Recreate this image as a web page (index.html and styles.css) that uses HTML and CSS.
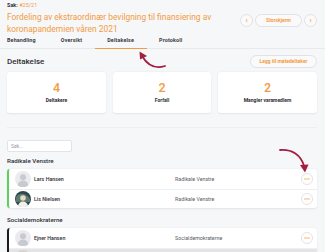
FILE: index.html
```html
<!DOCTYPE html>
<html lang="no">
  <head>
    <meta charset="UTF-8" />
    <title>Deltakelse</title>
    <link rel="stylesheet" href="styles.css">
  </head>
  <body>
    <div class="top">
      <div class="top-main">
        <div class="sak"><b>Sak:</b> <span class="sak-nr">#25/21</span></div>
        <h1>Fordeling av ekstraordinær bevilgning til finansiering av koronapandemien våren 2021</h1>
      </div>
      <div class="nav-buttons">
        <button class="round-btn">&#8249;</button>
        <button class="pill-btn">Storskjerm</button>
        <button class="round-btn">&#8250;</button>
      </div>
    </div>

    <nav class="tabs">
      <a class="tab">Behandling</a>
      <a class="tab">Oversikt</a>
      <a class="tab active">Deltakelse</a>
      <a class="tab">Protokoll</a>
    </nav>

    <main class="content">
      <div class="section-head">
        <h2>Deltakelse</h2>
        <button class="pill-btn">Legg til møtedeltaker</button>
      </div>

      <div class="stats">
        <div class="stat"><div class="stat-num">4</div><div class="stat-label">Deltakere</div></div>
        <div class="stat"><div class="stat-num">2</div><div class="stat-label">Forfall</div></div>
        <div class="stat"><div class="stat-num">2</div><div class="stat-label">Mangler varamedlem</div></div>
      </div>

      <hr class="divider" />

      <input class="search" type="text" placeholder="Søk..." />

      <h3 class="group-title">Radikale Venstre</h3>
      <div class="group green">
        <div class="row">
          <div class="person">
            <svg class="avatar" viewBox="0 0 16 16"><circle cx="8" cy="8" r="8" fill="#ebebef"/><circle cx="8" cy="6.2" r="3" fill="#c9c9d0"/><path d="M2.6 14.2c0.6-3 2.8-4.6 5.4-4.6s4.8 1.6 5.4 4.6a8 8 0 0 1-10.8 0z" fill="#c9c9d0"/></svg>
            <span class="name">Lars Hansen</span>
          </div>
          <span class="party">Radikale Venstre</span>
          <button class="more"><svg viewBox="0 0 10 10"><circle cx="3" cy="5" r="0.7"/><circle cx="5" cy="5" r="0.7"/><circle cx="7" cy="5" r="0.7"/></svg></button>
        </div>
        <div class="row">
          <div class="person">
            <svg class="avatar" viewBox="0 0 16 16"><circle cx="8" cy="8" r="8" fill="#2f4652"/><path d="M1 6c2-3 5-4 8-3s5 3 6 5v3H1z" fill="#5a7a6c"/><circle cx="8" cy="7" r="2.8" fill="#e8d9c6"/><path d="M3 14.5c0.8-2.8 2.8-4 5-4s4.2 1.2 5 4a8 8 0 0 1-10 0z" fill="#f2f0ea"/></svg>
            <span class="name">Lis Nielsen</span>
          </div>
          <span class="party">Radikale Venstre</span>
          <button class="more"><svg viewBox="0 0 10 10"><circle cx="3" cy="5" r="0.7"/><circle cx="5" cy="5" r="0.7"/><circle cx="7" cy="5" r="0.7"/></svg></button>
        </div>
      </div>

      <h3 class="group-title second">Socialdemokraterne</h3>
      <div class="group black">
        <div class="row">
          <div class="person">
            <svg class="avatar" viewBox="0 0 16 16"><circle cx="8" cy="8" r="8" fill="#ebebef"/><circle cx="8" cy="6.2" r="3" fill="#c9c9d0"/><path d="M2.6 14.2c0.6-3 2.8-4.6 5.4-4.6s4.8 1.6 5.4 4.6a8 8 0 0 1-10.8 0z" fill="#c9c9d0"/></svg>
            <span class="name">Ejner Hansen</span>
          </div>
          <span class="party">Socialdemokraterne</span>
          <button class="more"><svg viewBox="0 0 10 10"><circle cx="3" cy="5" r="0.7"/><circle cx="5" cy="5" r="0.7"/><circle cx="7" cy="5" r="0.7"/></svg></button>
        </div>
        <div class="row absent">
          <div class="person">
            <svg class="avatar" viewBox="0 0 16 16"><circle cx="8" cy="8" r="8" fill="#d8d2cc"/><circle cx="8" cy="6.5" r="3" fill="#8a4b3c"/></svg>
          </div>
          <span></span>
          <button class="more"><svg viewBox="0 0 10 10"><circle cx="3" cy="5" r="0.7"/><circle cx="5" cy="5" r="0.7"/><circle cx="7" cy="5" r="0.7"/></svg></button>
        </div>
      </div>
    </main>

    <!-- hint arrows -->
    <svg class="hint-arrows" width="325" height="252" viewBox="0 0 325 252">
      <path d="M165 66 C156 69 148 66 142 56" fill="none" stroke="#a31f3f" stroke-width="1.8" stroke-linecap="round"/>
      <path d="M139.5 51.5 L147 56 L140 59.5 Z" fill="#a31f3f"/>
      <path d="M280 150 C292 149 301 155 304 166" fill="none" stroke="#a31f3f" stroke-width="1.8" stroke-linecap="round"/>
      <path d="M300 165 L308.5 164.5 L305 172.5 Z" fill="#a31f3f"/>
    </svg>
  </body>
</html>
```

FILE: styles.css
```css
:root {
  --orange: #f39b3f;
  --text: #2e2e33;
  --muted: #5b5b63;
  --line: #e8e9ed;
  --bg: #f6f7f9;
}
* {
  box-sizing: border-box;
}
body {
  margin: 0;
  background: var(--bg);
  font-family: Roboto, "Noto Sans", sans-serif;
  color: var(--text);
  width: 325px;
  height: 252px;
  overflow: hidden;
  position: relative;
}
button {
  font-family: inherit;
  cursor: pointer;
}
.top {
  display: flex;
  justify-content: space-between;
  padding: 2px 8px 0 7px;
}
.sak {
  font-size: 5.5px;
  line-height: 7px;
  color: var(--text);
}
.sak-nr {
  color: var(--orange);
}
h1 {
  margin: 2px 0 0;
  font-size: 8.4px;
  line-height: 12px;
  font-weight: 400;
  color: var(--orange);
  width: 210px;
}
.nav-buttons {
  display: flex;
  gap: 2px;
  margin-top: 12px;
  height: 13px;
}
.round-btn,
.pill-btn {
  height: 13px;
  border: 1px solid #e1e2e6;
  background: #fafafb;
  color: var(--orange);
  border-radius: 7px;
  padding: 0;
  font-size: 5px;
  font-weight: 700;
  line-height: 11px;
}
.round-btn {
  width: 13px;
  font-size: 7px;
}
.pill-btn {
  padding: 0 9px;
}
.nav-buttons .pill-btn {
  width: 47px;
  padding: 0;
}
.tabs {
  display: flex;
  padding-left: 7px;
  border-bottom: 1px solid var(--line);
  height: 14px;
}
.tab {
  font-size: 5.4px;
  font-weight: 700;
  letter-spacing: 0.15px;
  color: #3a3a40;
  padding: 2px 12.5px 0;
  height: 14px;
  line-height: 7px;
}
.tab:first-child {
  padding-left: 0;
}
.tab.active {
  border-bottom: 1.5px solid var(--orange);
}
.content {
  padding: 0 8px 0 7px;
}
.section-head {
  display: flex;
  justify-content: space-between;
  align-items: center;
  margin-top: 6px;
  height: 13px;
}
h2 {
  margin: 0;
  font-size: 8px;
  font-weight: 500;
  color: var(--text);
}
.section-head .pill-btn {
  width: 67px;
  padding: 0;
  background: #fafafb;
}
.stats {
  display: grid;
  grid-template-columns: 99px 98px 99px;
  gap: 7px;
  margin-top: 4px;
}
.stat {
  background: #fff;
  border-radius: 3px;
  box-shadow: 0 0.5px 2px rgba(0, 0, 0, 0.08);
  height: 41px;
  display: flex;
  flex-direction: column;
  align-items: center;
  padding-top: 9px;
}
.stat-num {
  font-size: 12.5px;
  line-height: 13px;
  font-weight: 500;
  color: var(--orange);
}
.stat-label {
  margin-top: 3px;
  font-size: 5px;
  font-weight: 700;
  color: var(--text);
}
.divider {
  border: 0;
  border-top: 1px solid #eceef1;
  margin: 14px 0 0;
}
.search {
  display: block;
  margin-top: 12px;
  width: 65px;
  height: 12px;
  border: 1px solid #e3e4e8;
  border-radius: 2px;
  background: #fff;
  padding: 0 3px;
  font-family: inherit;
  font-size: 5px;
}
.search::placeholder {
  color: #9a9aa2;
}
.group-title {
  margin: 4px 0 0;
  font-size: 6.2px;
  line-height: 10px;
  font-weight: 500;
  color: var(--text);
}
.group-title.second {
  margin-top: 7px;
}
.group {
  margin-top: 3px;
  background: #fff;
  border-radius: 3px;
  box-shadow: 0 0.5px 2px rgba(0, 0, 0, 0.08);
  border-left: 2px solid #5dcf5f;
  overflow: hidden;
}
.group.black {
  border-left-color: #1b1b1f;
}
.row {
  display: grid;
  grid-template-columns: 160px 1fr auto;
  align-items: center;
  height: 19.5px;
  padding: 0 4px 0 6px;
  border-top: 1px solid #eeeff2;
}
.row:first-child {
  border-top: 0;
}
.row.absent {
  background: #e4e4e6;
}
.person {
  display: flex;
  align-items: center;
  gap: 3px;
}
.avatar {
  width: 16px;
  height: 16px;
}
.name {
  font-size: 5.3px;
  font-weight: 500;
  color: var(--text);
}
.party {
  font-size: 5.3px;
  color: var(--muted);
}
.more {
  width: 12px;
  height: 12px;
  border-radius: 50%;
  border: 1px solid #e2e3e7;
  background: #fff;
  padding: 0;
  display: flex;
  align-items: center;
  justify-content: center;
}
.more svg {
  width: 10px;
  height: 10px;
  fill: var(--orange);
}
.hint-arrows {
  position: absolute;
  top: 0;
  left: 0;
  pointer-events: none;
}
```
